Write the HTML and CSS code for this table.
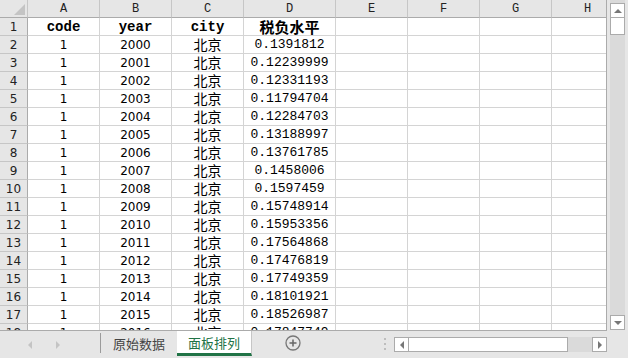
FILE: index.html
```html
<!DOCTYPE html>
<html>
  <head>
    <meta charset="utf-8">
    <link rel="stylesheet" href="styles.css">
  </head>
  <body>
    <div class="sheet">
      <div class="grid-wrap">
        <div class="row head">
          <div class="corner"><span class="tri"></span></div>
          <div class="ch">A</div><div class="ch">B</div><div class="ch">C</div><div class="ch">D</div>
          <div class="ch">E</div><div class="ch">F</div><div class="ch">G</div><div class="ch">H</div>
        </div>
        <div class="row">
          <div class="rh">1</div>
          <div class="c b">code</div><div class="c b">year</div><div class="c b">city</div><div class="c zh b">税负水平</div>
          <div class="c"></div><div class="c"></div><div class="c"></div><div class="c"></div>
        </div>
        <div class="row">
          <div class="rh">2</div>
          <div class="c n">1</div><div class="c n">2000</div><div class="c zh">北京</div><div class="c v">0.1391812</div>
          <div class="c"></div><div class="c"></div><div class="c"></div><div class="c"></div>
        </div>
        <div class="row">
          <div class="rh">3</div>
          <div class="c n">1</div><div class="c n">2001</div><div class="c zh">北京</div><div class="c v">0.12239999</div>
          <div class="c"></div><div class="c"></div><div class="c"></div><div class="c"></div>
        </div>
        <div class="row">
          <div class="rh">4</div>
          <div class="c n">1</div><div class="c n">2002</div><div class="c zh">北京</div><div class="c v">0.12331193</div>
          <div class="c"></div><div class="c"></div><div class="c"></div><div class="c"></div>
        </div>
        <div class="row">
          <div class="rh">5</div>
          <div class="c n">1</div><div class="c n">2003</div><div class="c zh">北京</div><div class="c v">0.11794704</div>
          <div class="c"></div><div class="c"></div><div class="c"></div><div class="c"></div>
        </div>
        <div class="row">
          <div class="rh">6</div>
          <div class="c n">1</div><div class="c n">2004</div><div class="c zh">北京</div><div class="c v">0.12284703</div>
          <div class="c"></div><div class="c"></div><div class="c"></div><div class="c"></div>
        </div>
        <div class="row">
          <div class="rh">7</div>
          <div class="c n">1</div><div class="c n">2005</div><div class="c zh">北京</div><div class="c v">0.13188997</div>
          <div class="c"></div><div class="c"></div><div class="c"></div><div class="c"></div>
        </div>
        <div class="row">
          <div class="rh">8</div>
          <div class="c n">1</div><div class="c n">2006</div><div class="c zh">北京</div><div class="c v">0.13761785</div>
          <div class="c"></div><div class="c"></div><div class="c"></div><div class="c"></div>
        </div>
        <div class="row">
          <div class="rh">9</div>
          <div class="c n">1</div><div class="c n">2007</div><div class="c zh">北京</div><div class="c v">0.1458006</div>
          <div class="c"></div><div class="c"></div><div class="c"></div><div class="c"></div>
        </div>
        <div class="row">
          <div class="rh">10</div>
          <div class="c n">1</div><div class="c n">2008</div><div class="c zh">北京</div><div class="c v">0.1597459</div>
          <div class="c"></div><div class="c"></div><div class="c"></div><div class="c"></div>
        </div>
        <div class="row">
          <div class="rh">11</div>
          <div class="c n">1</div><div class="c n">2009</div><div class="c zh">北京</div><div class="c v">0.15748914</div>
          <div class="c"></div><div class="c"></div><div class="c"></div><div class="c"></div>
        </div>
        <div class="row">
          <div class="rh">12</div>
          <div class="c n">1</div><div class="c n">2010</div><div class="c zh">北京</div><div class="c v">0.15953356</div>
          <div class="c"></div><div class="c"></div><div class="c"></div><div class="c"></div>
        </div>
        <div class="row">
          <div class="rh">13</div>
          <div class="c n">1</div><div class="c n">2011</div><div class="c zh">北京</div><div class="c v">0.17564868</div>
          <div class="c"></div><div class="c"></div><div class="c"></div><div class="c"></div>
        </div>
        <div class="row">
          <div class="rh">14</div>
          <div class="c n">1</div><div class="c n">2012</div><div class="c zh">北京</div><div class="c v">0.17476819</div>
          <div class="c"></div><div class="c"></div><div class="c"></div><div class="c"></div>
        </div>
        <div class="row">
          <div class="rh">15</div>
          <div class="c n">1</div><div class="c n">2013</div><div class="c zh">北京</div><div class="c v">0.17749359</div>
          <div class="c"></div><div class="c"></div><div class="c"></div><div class="c"></div>
        </div>
        <div class="row">
          <div class="rh">16</div>
          <div class="c n">1</div><div class="c n">2014</div><div class="c zh">北京</div><div class="c v">0.18101921</div>
          <div class="c"></div><div class="c"></div><div class="c"></div><div class="c"></div>
        </div>
        <div class="row">
          <div class="rh">17</div>
          <div class="c n">1</div><div class="c n">2015</div><div class="c zh">北京</div><div class="c v">0.18526987</div>
          <div class="c"></div><div class="c"></div><div class="c"></div><div class="c"></div>
        </div>
        <div class="row">
          <div class="rh">18</div>
          <div class="c n">1</div><div class="c n">2016</div><div class="c zh">北京</div><div class="c v">0.17847749</div>
          <div class="c"></div><div class="c"></div><div class="c"></div><div class="c"></div>
        </div>
      </div>
      <div class="vscroll">
        <div class="vtrack">
          <div class="sbtn"><span class="arr up"></span></div>
          <div class="vthumb"></div>
          <div class="vspace"></div>
          <div class="sbtn"><span class="arr down"></span></div>
        </div>
      </div>
    </div>
    <div class="tabbar">
      <div class="nav">
        <span class="arr left light"></span>
        <span class="arr right light"></span>
      </div>
      <div class="sep"></div>
      <div class="tab">原始数据</div>
      <div class="tab active">面板排列</div>
      <div class="add">
        <svg width="16" height="16" viewBox="0 0 16 16">
          <circle cx="8" cy="8" r="7" fill="none" stroke="#777" stroke-width="1.3"/>
          <path d="M8 4.5v7M4.5 8h7" stroke="#666" stroke-width="1.5"/>
        </svg>
      </div>
      <div class="dots"><i></i><i></i><i></i></div>
      <div class="hscroll">
        <div class="sbtn"><span class="arr left"></span></div>
        <div class="hthumb"></div>
        <div class="hspace"></div>
        <div class="sbtn"><span class="arr right"></span></div>
      </div>
    </div>
  </body>
</html>
```
FILE: styles.css
```css
html,
body {
  margin: 0;
  width: 628px;
  height: 358px;
  overflow: hidden;
  background: #e6e6e6;
}
body {
  font-family: "Liberation Sans", sans-serif;
  color: #000;
}
.sheet {
  display: flex;
  height: 331px;
}
.grid-wrap {
  width: 606px;
  height: 330px;
  overflow: hidden;
  background: #fff;
  border-right: 1px solid #ababab;
  border-bottom: 1px solid #ababab;
}
.row {
  display: grid;
  grid-template-columns: 28px 72px 72px 72px 92px 72px 72px 72px 72px;
  height: 18px;
}
.row > div {
  box-sizing: border-box;
  height: 18px;
  border-right: 1px solid #d4d4d4;
  border-bottom: 1px solid #d4d4d4;
  text-align: center;
  white-space: nowrap;
}
.head > div {
  background: #e6e6e6;
  border-right-color: #c6c6c6;
  border-bottom-color: #ababab;
}
.corner {
  display: flex;
  justify-content: flex-end;
  align-items: flex-end;
  padding: 0 2px 2px 0;
}
.tri {
  width: 0;
  height: 0;
  border-left: 11px solid transparent;
  border-bottom: 11px solid #c4c4c4;
}
.ch {
  font-family: "Liberation Mono", monospace;
  font-size: 12px;
  line-height: 16px;
  padding-top: 1px;
  color: #222;
}
.row > .rh {
  background: #e6e6e6;
  border-right-color: #ababab;
  border-bottom-color: #c6c6c6;
  font-family: "DejaVu Sans", sans-serif;
  font-size: 12px;
  line-height: 16px;
  padding-top: 1px;
  color: #222;
}
.c {
  font-family: "Liberation Mono", monospace;
  font-size: 13px;
  line-height: 16px;
  padding-top: 1px;
}
.c.b {
  font-weight: bold;
  font-size: 14px;
}
.c.n {
  font-family: "DejaVu Sans", sans-serif;
  font-size: 12px;
}
.c.zh {
  font-family: "Noto Sans CJK SC", sans-serif;
  font-size: 14px;
  line-height: 17px;
  padding-top: 0;
}
.c.zh.b {
  font-size: 15px;
}
.vscroll {
  width: 21px;
  height: 330px;
  padding: 0 3px;
  box-sizing: border-box;
}
.vtrack {
  display: flex;
  flex-direction: column;
  height: 330px;
  padding-top: 3px;
  box-sizing: border-box;
  background: #dadada;
}
.sbtn {
  width: 15px;
  height: 15px;
  box-sizing: border-box;
  background: #fff;
  border: 1px solid #ababab;
  display: flex;
  align-items: center;
  justify-content: center;
  flex: none;
}
.vthumb {
  height: 18px;
  margin-top: -1px;
  box-sizing: border-box;
  background: #fff;
  border: 1px solid #ababab;
}
.vspace,
.hspace {
  flex: 1;
}
.arr {
  width: 0;
  height: 0;
}
.arr.up {
  border-left: 4px solid transparent;
  border-right: 4px solid transparent;
  border-bottom: 4px solid #777;
}
.arr.down {
  border-left: 4px solid transparent;
  border-right: 4px solid transparent;
  border-top: 4px solid #777;
}
.arr.left {
  border-top: 4px solid transparent;
  border-bottom: 4px solid transparent;
  border-right: 4px solid #777;
}
.arr.right {
  border-top: 4px solid transparent;
  border-bottom: 4px solid transparent;
  border-left: 4px solid #777;
}
.arr.left.light {
  border-right-color: #c4c4c4;
}
.arr.right.light {
  border-left-color: #c4c4c4;
}
.tabbar {
  display: flex;
  align-items: stretch;
  height: 27px;
}
.nav {
  width: 100px;
  display: flex;
  align-items: center;
  gap: 24px;
  padding-left: 28px;
  box-sizing: border-box;
}
.sep {
  width: 1px;
  height: 20px;
  margin-top: 2px;
  background: #9b9b9b;
}
.tab {
  width: 76px;
  display: flex;
  align-items: center;
  justify-content: center;
  font-family: "Noto Sans CJK SC", sans-serif;
  font-size: 13px;
  color: #444;
  padding-bottom: 3px;
  box-sizing: border-box;
}
.tab.active {
  width: 75px;
  background: #fff;
  color: #217346;
  border-right: 1px solid #c6c6c6;
  border-bottom: 3px solid #217346;
  padding-bottom: 0;
  height: 25px;
}
.add {
  width: 82px;
  display: flex;
  align-items: center;
  padding: 0 0 3px 33px;
  box-sizing: border-box;
}
.dots {
  width: 16px;
  display: flex;
  flex-direction: column;
  align-items: center;
  justify-content: center;
  gap: 3px;
  margin-left: 43px;
  padding-bottom: 2px;
}
.dots i {
  width: 2px;
  height: 2px;
  background: #bdbdbd;
}
.hscroll {
  display: flex;
  width: 213px;
  height: 15px;
  margin-top: 6px;
  margin-left: 1px;
  background: #dadada;
}
.hthumb {
  width: 160px;
  margin-left: -1px;
  box-sizing: border-box;
  background: #fff;
  border: 1px solid #ababab;
}
```
